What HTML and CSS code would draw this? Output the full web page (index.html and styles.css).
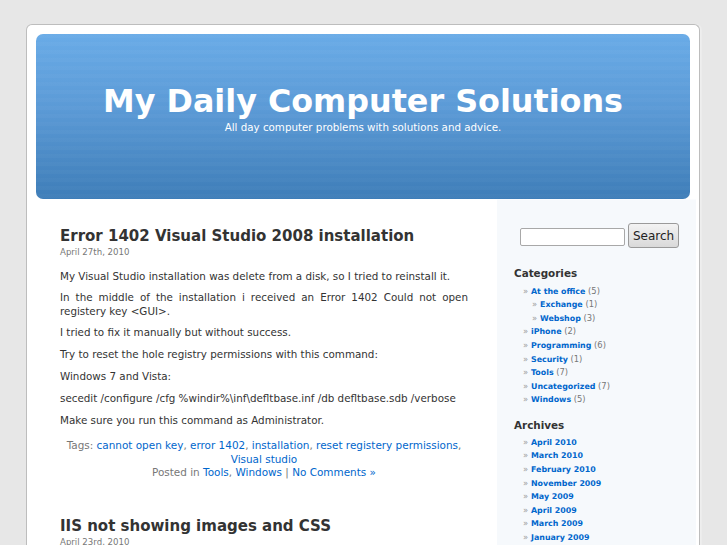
FILE: index.html
```html
<!DOCTYPE html>
<html lang="en">
<head>
<meta charset="utf-8">
<title>My Daily Computer Solutions</title>
<link rel="stylesheet" href="styles.css">
</head>
<body>
<div class="page">
  <header class="header">
    <h1 class="site-title">My Daily Computer Solutions</h1>
    <div class="site-desc">All day computer problems with solutions and advice.</div>
  </header>
  <div class="main">
    <div class="content">
      <div class="post">
        <h2 class="post-title">Error 1402 Visual Studio 2008 installation</h2>
        <div class="post-date">April 27th, 2010</div>
        <div class="entry">
          <p>My Visual Studio installation was delete from a disk, so I tried to reinstall it.</p>
          <p>In the middle of the installation i received an Error 1402 Could not open registery key &lt;GUI&gt;.</p>
          <p>I tried to fix it manually but without success.</p>
          <p>Try to reset the hole registry permissions with this command:</p>
          <p>Windows 7 and Vista:</p>
          <p>secedit /configure /cfg %windir%\inf\defltbase.inf /db defltbase.sdb /verbose</p>
          <p>Make sure you run this command as Administrator.</p>
        </div>
        <p class="postmeta">Tags: <a href="#">cannot open key</a>, <a href="#">error 1402</a>, <a href="#">installation</a>, <a href="#">reset registery permissions</a>, <a href="#">Visual studio</a><br>Posted in <a href="#">Tools</a>, <a href="#">Windows</a> | <a href="#">No Comments &raquo;</a></p>
      </div>
      <div class="post">
        <h2 class="post-title">IIS not showing images and CSS</h2>
        <div class="post-date">April 23rd, 2010</div>
      </div>
    </div>
    <aside class="sidebar">
      <form class="search">
        <input class="search-input" type="text">
        <button class="search-btn" type="button">Search</button>
      </form>
      <h3 class="side-head">Categories</h3>
      <ul class="side-list">
        <li><a href="#">At the office</a> (5)
          <ul class="side-list sub">
            <li><a href="#">Exchange</a> (1)</li>
            <li><a href="#">Webshop</a> (3)</li>
          </ul>
        </li>
        <li><a href="#">iPhone</a> (2)</li>
        <li><a href="#">Programming</a> (6)</li>
        <li><a href="#">Security</a> (1)</li>
        <li><a href="#">Tools</a> (7)</li>
        <li><a href="#">Uncategorized</a> (7)</li>
        <li><a href="#">Windows</a> (5)</li>
      </ul>
      <h3 class="side-head archives">Archives</h3>
      <ul class="side-list">
        <li><a href="#">April 2010</a></li>
        <li><a href="#">March 2010</a></li>
        <li><a href="#">February 2010</a></li>
        <li><a href="#">November 2009</a></li>
        <li><a href="#">May 2009</a></li>
        <li><a href="#">April 2009</a></li>
        <li><a href="#">March 2009</a></li>
        <li><a href="#">January 2009</a></li>
      </ul>
    </aside>
  </div>
</div>
</body>
</html>
```
FILE: styles.css
```css
html, body {
  margin: 0;
  padding: 0;
}
body {
  background: #e7e7e7;
  font-family: "DejaVu Sans", "Liberation Sans", sans-serif;
  color: #333;
  padding-top: 24px;
  overflow: hidden;
}
a {
  color: #0066cc;
  text-decoration: none;
}
.page {
  margin-left: 26px;
  width: 672px;
  min-height: 560px;
  background: #fff;
  border: 1px solid #bdbdbd;
  border-bottom: 0;
  border-radius: 6px 6px 0 0;
  box-shadow: 1px 0 0 #eeeeee, 2px 0 0 #ececec;
}
.header {
  margin: 9px 9px 0 9px;
  height: 165px;
  border-radius: 7px;
  background:
    repeating-linear-gradient(to bottom, rgba(255,255,255,0.025) 0 4px, rgba(255,255,255,0) 4px 8px),
    linear-gradient(to bottom, #69abe7 0%, #5b9ad6 45%, #3e7db8 100%);
  color: #fff;
  text-align: center;
  padding-top: 48px;
  box-sizing: border-box;
}
.site-title {
  margin: 0;
  font-size: 31.8px;
  line-height: 38px;
  font-weight: bold;
}
.site-desc {
  font-size: 10.3px;
  line-height: 13px;
  margin-top: 1px;
}
.main {
  display: flex;
  align-items: flex-start;
}
.content {
  flex: none;
  width: 408px;
  padding: 28px 0 0 33px;
}
.post {
  margin-bottom: 37px;
}
.post-title {
  margin: 0;
  font-size: 15px;
  line-height: 18px;
  font-weight: bold;
  color: #333;
}
.post-date {
  margin-top: 2px;
  font-size: 8.6px;
  line-height: 11px;
  color: #777;
}
.entry {
  padding-top: 3px;
  font-size: 10.35px;
  line-height: 13.2px;
  text-align: justify;
}
.entry p {
  margin: 8.6px 0;
}
.postmeta {
  margin: 12.5px 0 0 0;
  font-size: 10.45px;
  line-height: 13.5px;
  color: #777;
  text-align: center;
}
.sidebar {
  flex: none;
  margin-left: 29px;
  width: 199px;
  min-height: 360px;
  background: #f6f9fc;
  border-top: 1px solid #fbfcfe;
  padding-top: 23px;
  box-sizing: border-box;
}
.search {
  display: flex;
  align-items: center;
  margin: 0 0 0 23px;
}
.search-input {
  width: 105px;
  height: 18px;
  box-sizing: border-box;
  border: 1px solid #a8a8a8;
  border-radius: 2px;
  background: #fff;
  margin: 2px 3px 0 0;
  padding: 0;
}
.search-btn {
  width: 51px;
  height: 25px;
  box-sizing: border-box;
  font-family: "DejaVu Sans", sans-serif;
  font-size: 12px;
  color: #222;
  border: 1px solid #9a9a9a;
  border-radius: 3px;
  background: linear-gradient(to bottom, #f3f3f3, #d9d9d9);
  padding: 0;
}
.side-head {
  margin: 19px 0 4.7px 17px;
  font-size: 10.4px;
  line-height: 13px;
  font-weight: bold;
  color: #333;
}
.side-head.archives {
  margin-top: 12px;
  margin-bottom: 3.7px;
}
.side-list {
  list-style: none;
  margin: 0;
  padding: 0 0 0 26px;
  font-size: 8.4px;
  line-height: 13.6px;
  color: #777;
}
.side-list.sub {
  padding-left: 9px;
}
.side-list li::before {
  content: "\00BB";
  display: inline-block;
  width: 8px;
  color: #999;
}
.side-list a {
  font-weight: bold;
  font-size: 7.9px;
}
```
